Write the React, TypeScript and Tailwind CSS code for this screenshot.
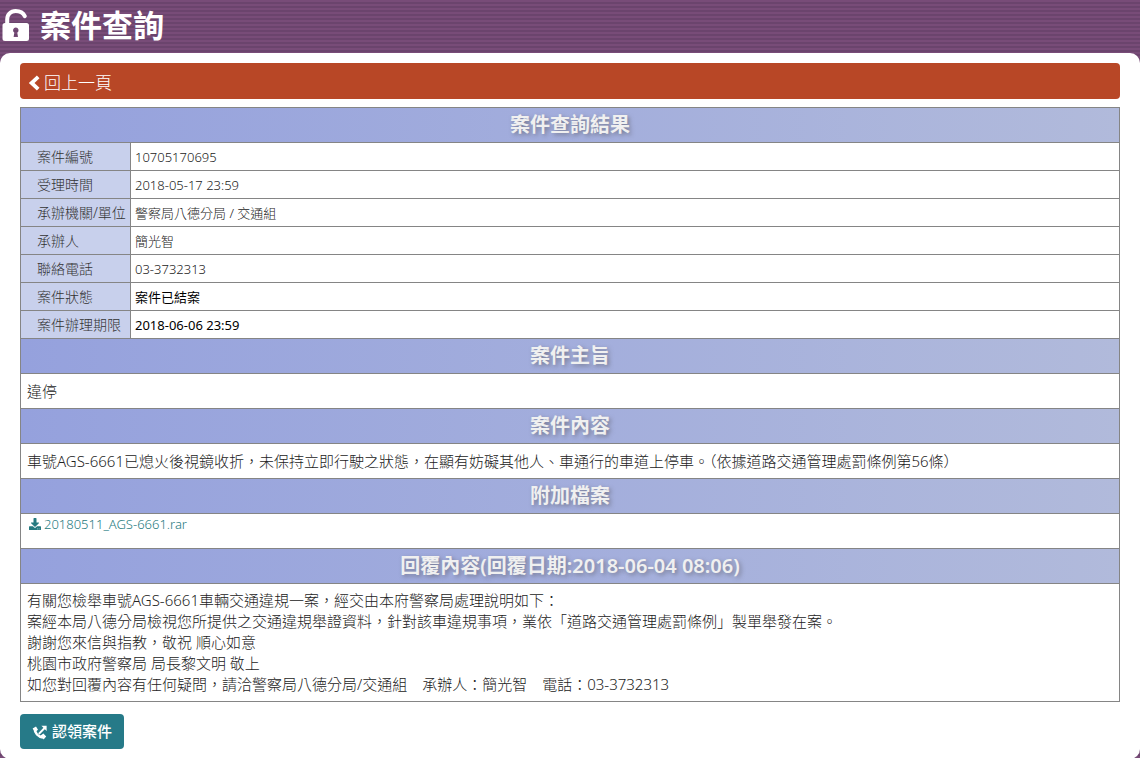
import type { ReactNode } from 'react';
import { FaDownload } from 'react-icons/fa';

// ============================================
// CASE DATA
// ============================================
type Field = { label: string; value: string; strong?: boolean };

const fields: Field[] = [
  { label: '案件編號', value: '10705170695' },
  { label: '受理時間', value: '2018-05-17 23:59' },
  { label: '承辦機關/單位', value: '警察局八德分局 / 交通組' },
  { label: '承辦人', value: '簡光智' },
  { label: '聯絡電話', value: '03-3732313' },
  { label: '案件狀態', value: '案件已結案', strong: true },
  { label: '案件辦理期限', value: '2018-06-06 23:59', strong: true },
];

const reply = [
  '有關您檢舉車號AGS-6661車輛交通違規一案，經交由本府警察局處理說明如下：',
  '案經本局八德分局檢視您所提供之交通違規舉證資料，針對該車違規事項，業依「道路交通管理處罰條例」製單舉發在案。',
  '謝謝您來信與指教，敬祝 順心如意',
  '桃園市政府警察局 局長黎文明 敬上',
  '如您對回覆內容有任何疑問，請洽警察局八德分局/交通組　承辦人：簡光智　電話：03-3732313',
];

// ============================================
// ICONS
// ============================================
const OpenLock = () => (
  <svg viewBox="0 0 28 32" className="h-8 w-7" aria-hidden="true">
    <path d="M5.2 17V10.5C5.2 5.4 8.6 2 13.6 2c4.4 0 7.6 1.9 9.2 5.2" fill="none" stroke="currentColor" strokeWidth="4" strokeLinecap="round" />
    <path
      d="M3 14h21.5a2.500 2.500 0 0 1 2.500 2.500V29.500a2.500 2.500 0 0 1-2.500 2.500H3a2.500 2.500 0 0 1-2.500-2.500V16.500A2.500 2.500 0 0 1 3 14zM13.800 18.500a2.900 2.900 0 0 0-1.500 5.300L11.600 28h4.400l-.7-4.200a2.900 2.900 0 0 0-1.500-5.300z"
      fill="currentColor"
      fillRule="evenodd"
    />
  </svg>
);

const Chevron = () => (
  <svg viewBox="0 0 12 16" className="h-4 w-3" fill="none" stroke="currentColor" strokeWidth="3.8" aria-hidden="true">
    <path d="M10.2 1.8 3.6 8l6.6 6.2" />
  </svg>
);

const PhoneArrow = () => (
  <svg viewBox="0 0 16 16" className="size-4" fill="none" stroke="currentColor" aria-hidden="true">
    <path d="M2.6 4.5C2.8 9 6 12.6 11 13.4" strokeWidth="2.6" />
    <path d="M.6 4.6 4 2.4 6 5.8 3.4 8zM8.6 11.4 11.4 9.6 14.2 12.4 11.6 15.6z" fill="currentColor" stroke="none" />
    <path d="M6.8 10 12.6 4" strokeWidth="1.8" />
    <path d="M9.4 1.8H14.6V7z" fill="currentColor" stroke="none" />
  </svg>
);

// ============================================
// TABLE ROWS
// ============================================
const SectionHead = ({ children }: { children: ReactNode }) => (
  <tr className="h-[35px] bg-linear-to-r from-[#95a1dd] to-[#b1badb]">
    <th colSpan={2} className="border border-[#858585] p-0 text-xl leading-6 font-semibold text-[#f0f0f0] text-shadow-[2px_2px_4px_rgb(90_90_100_/_0.6)]">
      {children}
    </th>
  </tr>
);

const SectionBody = ({ children }: { children: ReactNode }) => (
  <tr className="h-[35px]">
    <td colSpan={2} className="border border-[#858585] px-1.5 py-1.5 text-[15px] leading-[21px]">
      {children}
    </td>
  </tr>
);

function App() {
  return (
    <div className="min-h-screen bg-[repeating-linear-gradient(to_bottom,#784c78_0_2px,#6b446d_2px_4px)] font-['Noto_Sans','Noto_Sans_CJK_TC',sans-serif] text-[#222]">
      <header className="flex h-[53px] items-center gap-2.5 px-0.5 pb-1 text-white">
        <OpenLock />
        <h1 className="text-[31px] leading-10 font-bold">案件查詢</h1>
      </header>

      <main className="rounded-[10px] bg-white px-5 py-2.5 font-light">
        <a href="#back" className="flex h-9 items-center gap-1 rounded bg-[#b84726] px-2 pt-1 text-[17px] text-white">
          <Chevron />
          回上一頁
        </a>

        <table className="mt-2 w-full border-collapse">
          <tbody>
            <SectionHead>案件查詢結果</SectionHead>
            {fields.map(({ label, value, strong }) => (
              <tr key={label} className="h-7">
                <th scope="row" className="w-[110px] border border-[#858585] bg-[#c8d0ec] p-0 pl-4 text-left text-sm leading-5 font-light whitespace-nowrap text-[#333]">
                  {label}
                </th>
                <td className={`border border-[#858585] px-1 py-0 text-[13px] leading-5 ${strong ? 'font-normal text-black' : ''}`}>{value}</td>
              </tr>
            ))}

            <SectionHead>案件主旨</SectionHead>
            <SectionBody>違停</SectionBody>

            <SectionHead>案件內容</SectionHead>
            <SectionBody>
              車號AGS-6661已熄火後視鏡收折，未保持立即行駛之狀態，在顯有妨礙其他人、車通行的車道上停車。（依據道路交通管理處罰條例第56條）
            </SectionBody>

            <SectionHead>附加檔案</SectionHead>
            <tr className="h-[35px]">
              <td colSpan={2} className="border border-[#858585] px-2 py-0 align-top text-[13px] leading-5">
                <a href="#file" className="inline-flex items-center gap-[3px] text-[#257a80]">
                  <FaDownload className="size-3" />
                  20180511_AGS-6661.rar
                </a>
              </td>
            </tr>

            <SectionHead>回覆內容(回覆日期:2018-06-04 08:06)</SectionHead>
            <SectionBody>
              {reply.map((line) => (
                <p key={line}>{line}</p>
              ))}
            </SectionBody>
          </tbody>
        </table>

        <button type="button" className="mt-3 flex h-[35px] items-center gap-1 rounded bg-[#267a88] px-3 text-[15px] font-medium text-white">
          <PhoneArrow />
          認領案件
        </button>
      </main>
    </div>
  );
}

export default App;
